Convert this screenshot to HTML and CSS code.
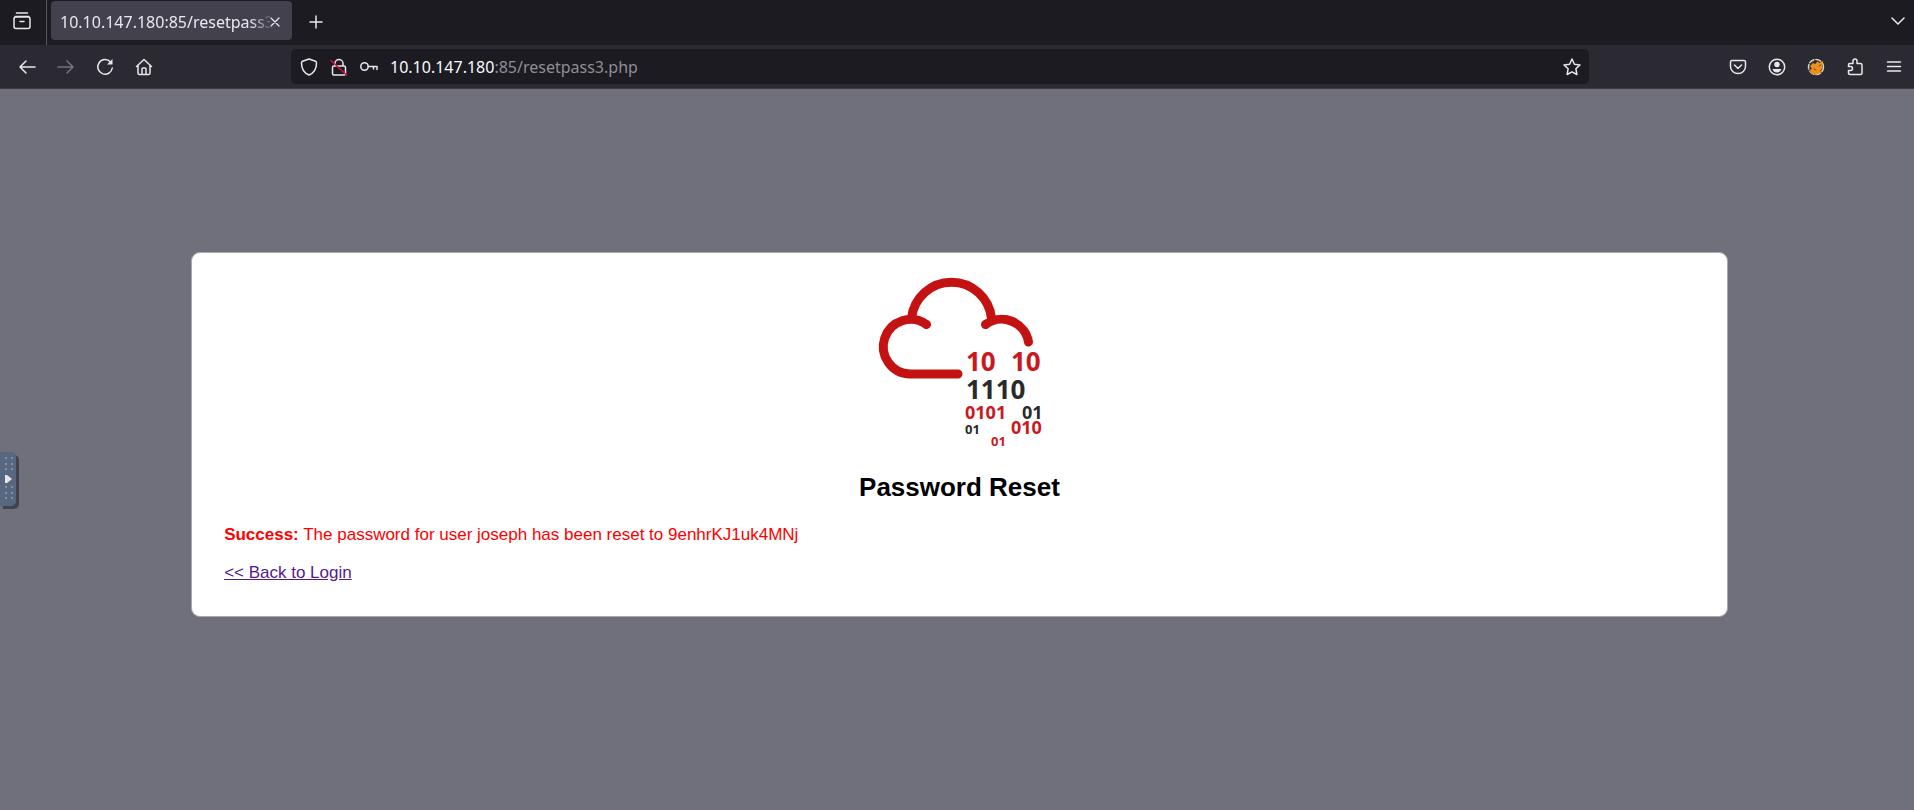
FILE: index.html
```html
<!DOCTYPE html>
<html lang="en">
<head>
<meta charset="utf-8">
<title>Password Reset</title>
<link rel="stylesheet" href="styles.css">
</head>
<body>
<header class="browser">
  <div class="tabs">
    <button class="icon-btn overview" aria-label="Firefox View">
      <svg class="icon icon-lg" viewBox="0 0 20 20"><path d="M4.500 2h11M3 5.500h14M2 8v7.500q0 2 2 2h12q2 0 2-2V8q0-2-2-2H4q-2 0-2 2zM8 10.500h4"/></svg>
    </button>
    <div class="tab">
      <span class="tab-title">10.10.147.180:85/resetpass3.php</span>
      <button class="tab-close" aria-label="Close tab"><svg class="icon icon-xs" viewBox="0 0 10 10"><path d="M1 1l8 8M9 1l-8 8"/></svg></button>
    </div>
    <button class="icon-btn new-tab" aria-label="New tab"><svg class="icon icon-sm" viewBox="0 0 14 14"><path d="M7 1v12M1 7h12"/></svg></button>
    <button class="icon-btn list-tabs" aria-label="List all tabs"><svg class="icon icon-sm" viewBox="0 0 14 14"><path d="M1 3l6 6 6-6"/></svg></button>
  </div>
  <div class="toolbar">
    <nav class="nav">
      <button class="icon-btn" aria-label="Back"><svg class="icon" viewBox="0 0 18 18"><path d="M17 9H2M8 3L2 9l6 6"/></svg></button>
      <button class="icon-btn" aria-label="Forward" disabled><svg class="icon" viewBox="0 0 18 18"><path d="M1 9h15M10 3l6 6-6 6"/></svg></button>
      <button class="icon-btn" aria-label="Reload"><svg class="icon" viewBox="0 0 18 18"><path d="M14.500 4A7.300 7.300 0 1 0 16.300 10"/><path class="solid" d="M16.500 1v5.500H11z"/></svg></button>
      <button class="icon-btn" aria-label="Home"><svg class="icon" viewBox="0 0 18 18"><path d="M1.500 8.500L9 1.500l7.500 7M3 7.500V15q0 1.500 1.500 1.500h9Q15 16.500 15 15V7.500M7 16v-5q0-1 1-1h2q1 0 1 1v5"/></svg></button>
    </nav>
    <div class="urlbar">
      <svg class="icon" viewBox="0 0 18 18"><path d="M9 1L2.500 3.300Q1.500 3.700 1.500 5c0 6 2.500 10 7.500 12 5-2 7.500-6 7.500-12q0-1.300-1-1.700z"/></svg>
      <svg class="icon" viewBox="0 0 18 18"><path d="M4 8h10q1.500 0 1.500 1.500v6q0 1.500-1.500 1.500H4q-1.500 0-1.500-1.500v-6Q2.500 8 4 8zM5 8V5.500a4 4 0 0 1 8 0V8"/><path class="slash" d="M1 2.500L16.500 17"/></svg>
      <svg class="icon" viewBox="0 0 18 18"><circle cx="4.500" cy="8.500" r="3.700"/><path d="M8.200 8.500H17v3M13.500 8.500v2.500"/></svg>
      <a class="url" href="#"><span class="host">10.10.147.180</span>:85/resetpass3.php</a>
      <button class="icon-btn star" aria-label="Bookmark"><svg class="icon" viewBox="0 0 18 18"><path d="M9 1l2.400 5.200 5.600.7-4.100 3.900 1 5.700L9 13.800l-4.900 2.700 1-5.700L1 6.900l5.600-.7z"/></svg></button>
    </div>
    <div class="tools">
      <button class="icon-btn" aria-label="Pocket"><svg class="icon" viewBox="0 0 18 18"><path d="M3 2.500h12q1.500 0 1.500 1.500v4.500a7.500 7 0 0 1-15 0V4q0-1.500 1.500-1.500zM5.500 7L9 10.500 12.500 7"/></svg></button>
      <button class="icon-btn" aria-label="Account"><svg class="icon" viewBox="0 0 18 18"><circle cx="9" cy="9" r="7.700"/><circle class="solid" cx="9" cy="6.500" r="2.700"/><path class="solid" d="M4.500 11h9q-1 3.500-4.500 3.500T4.500 11z"/></svg></button>
      <button class="icon-btn" aria-label="FoxyProxy"><svg class="icon" viewBox="0 0 18 18"><circle class="fox-rim" cx="9" cy="9" r="7.500"/><path class="fox" d="M3 8l3-3 2 1 3-3 1 2 4-2-1 5 1 3-3 4-4 2-4-1-3-4 3-1z"/><path class="fox-mark" d="M5 5l2-2M12 8l2-1M7 11l2 1M13 13l2-2M2 11l1 2"/></svg></button>
      <button class="icon-btn" aria-label="Extensions"><svg class="icon" viewBox="0 0 18 18"><path d="M3.500 5.500H7V3a2 2 0 0 1 4 0v2.500h3.500q1.500 0 1.500 1.500v8q0 1.500-1.500 1.500h-10Q2.500 16.500 2.500 15v-2.500h2a2 2 0 0 0 0-4h-2V7q0-1.500 1-1.500z"/></svg></button>
      <button class="icon-btn" aria-label="Menu"><svg class="icon" viewBox="0 0 18 18"><path d="M2.500 4h13M2.500 8.500h13M2.500 13h13"/></svg></button>
    </div>
  </div>
</header>
<main class="page">
  <section class="card">
    <svg class="logo" viewBox="13 14 172 176" role="img" aria-label="TryHackMe">
      <g class="cloud">
        <path d="M51.500 57.500A40.200 40.200 0 0 1 131.500 57.500"/>
        <path d="M66.500 63.500A27.300 27.300 0 1 0 50 113H98"/>
        <path d="M125.500 63.500A27.300 27.300 0 0 1 168.500 81"/>
      </g>
      <g class="bits red">
        <text class="b-lg" x="106" y="110">10</text><text class="b-lg" x="151" y="110">10</text>
        <text class="b-md" x="105" y="158">0101</text><text class="b-md" x="151" y="173">010</text>
        <text class="b-sm" x="131" y="185">01</text>
      </g>
      <g class="bits dark">
        <text class="b-lg" x="106" y="138">1110</text>
        <text class="b-md" x="162" y="158">01</text><text class="b-sm" x="105" y="173">01</text>
      </g>
    </svg>
    <h1 class="title">Password Reset</h1>
    <p class="message"><strong>Success:</strong> The password for user joseph has been reset to 9enhrKJ1uk4MNj</p>
    <a class="back" href="#">&lt;&lt; Back to Login</a>
  </section>
</main>
<button class="drawer" aria-label="Open side panel">
  <svg class="drawer-icon" viewBox="0 0 12 46"><g class="dots"><path d="M2 2h8M2 8h8M2 13h8M2 31h8M2 37h8M2 42h8"/></g><path class="arrow" d="M2 19h2l5 4-5 4H2z"/></svg>
</button>
</body>
</html>
```
FILE: styles.css
```css
* { box-sizing: border-box; }
body {
  margin: 0;
  min-height: 100vh;
  display: flex;
  flex-direction: column;
  background: #70707c;
  font-family: "Liberation Sans", Arial, sans-serif;
  font-size: 17px;
}
button { border: 0; padding: 0; background: none; color: inherit; }
.browser {
  color: #e8e8ec;
  font-family: "Noto Sans", "Open Sans", sans-serif;
  font-size: 16px;
}
.icon {
  display: block;
  flex: none;
  width: 18px;
  height: 18px;
  fill: none;
  stroke: currentColor;
  stroke-width: 1.5;
  stroke-linejoin: round;
  stroke-linecap: round;
}
.icon-lg { width: 20px; height: 20px; }
.icon-sm { width: 14px; height: 14px; }
.icon-xs { width: 10px; height: 10px; stroke-width: 1.2; }
.icon .solid { fill: currentColor; stroke: none; }
.icon .slash { stroke: #d80f3c; }
.fox-rim { stroke: #ddd5c8; stroke-dasharray: 5 2; }
.icon .fox { fill: #ed9118; stroke: none; }
.fox-mark { stroke: #694b25; stroke-width: 1; }
.icon-btn { display: grid; place-items: center; flex: none; width: 39px; height: 36px; }
.icon-btn:disabled { color: #74737c; }
.tabs { display: flex; align-items: center; height: 45px; background: #1c1b22; }
.overview { width: 47px; height: 45px; padding: 0 2px 3px 0; border-right: 1px solid #5a5960; }
.tab {
  display: flex;
  align-items: center;
  width: 241px;
  height: 39px;
  margin: 0 4px 4px;
  padding: 2px 12px 0 9px;
  border-radius: 4px;
  background: #42414d;
}
.tab-title {
  flex: 1;
  overflow: hidden;
  white-space: nowrap;
  mask-image: linear-gradient(to left, rgba(0, 0, 0, 0.2), #000 20px);
}
.new-tab, .list-tabs { padding-bottom: 2px; }
.list-tabs { margin-left: auto; width: 32px; }
.toolbar {
  display: flex;
  align-items: center;
  height: 44px;
  background: #2b2a33;
  border-bottom: 1px solid #3c3b46;
}
.nav { display: flex; padding-left: 7px; width: 291px; }
.urlbar {
  flex: 1;
  display: flex;
  align-items: center;
  gap: 12px;
  height: 35px;
  padding-left: 9px;
  border-radius: 5px;
  background: #1c1b22;
}
.url { color: #8f8e95; text-decoration: none; }
.host { color: #fbfbfe; }
.star { margin-left: auto; width: 34px; }
.tools { display: flex; justify-content: flex-end; width: 325px; padding-right: 1px; }
.page {
  flex: 1;
  display: flex;
  flex-direction: column;
  align-items: center;
  padding: 163px 0 0 5px;
}
.card {
  display: flex;
  flex-direction: column;
  align-items: flex-start;
  width: 80.5%;
  padding: 22px 32px 33px;
  border: 1px solid #aaa9b0;
  border-radius: 9px;
  background: #fff;
}
.logo { align-self: center; width: 172px; height: 176px; }
.cloud { fill: none; stroke: #c41212; stroke-width: 9; stroke-linecap: round; }
.bits { font-family: "Open Sans", "Noto Sans", sans-serif; font-weight: 700; }
.red { fill: #cb181d; }
.dark { fill: #2a2a2a; }
.b-lg { font-size: 26px; }
.b-md { font-size: 18px; }
.b-sm { font-size: 13px; }
.title { align-self: center; margin: 21px 0 22px; font-size: 26px; line-height: 31px; }
.message { margin: 0 0 18px; color: #f00; line-height: 20px; }
.back { color: #551a8b; line-height: 20px; }
.drawer {
  position: absolute;
  left: 0;
  top: 452px;
  width: 16px;
  height: 54px;
  border-radius: 0 5px 5px 0;
  background: #586780;
  box-shadow: 3px 3px 0 #42434d;
}
.drawer-icon { display: block; width: 12px; height: 46px; margin-left: 3px; }
.dots { fill: none; stroke: #8290a4; stroke-width: 2; stroke-dasharray: 2 4; }
.arrow { fill: #e6e6e6; }
```
